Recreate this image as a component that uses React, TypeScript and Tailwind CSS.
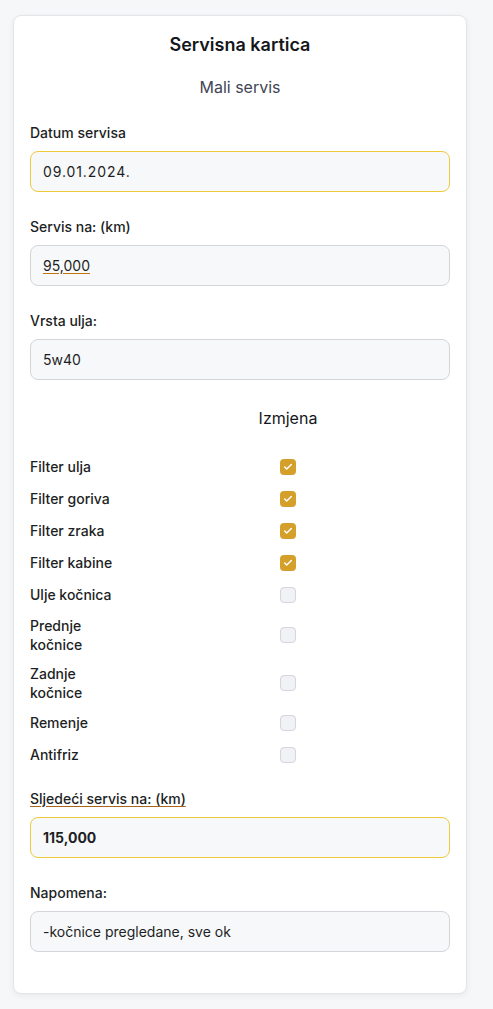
import { Check } from "lucide-react";

type Item = { label: string; checked: boolean; twoLine?: boolean };

const items: Item[] = [
  { label: "Filter ulja", checked: true },
  { label: "Filter goriva", checked: true },
  { label: "Filter zraka", checked: true },
  { label: "Filter kabine", checked: true },
  { label: "Ulje kočnica", checked: false },
  { label: "Prednje kočnice", checked: false, twoLine: true },
  { label: "Zadnje kočnice", checked: false, twoLine: true },
  { label: "Remenje", checked: false },
  { label: "Antifriz", checked: false },
];

function Box({ checked }: { checked: boolean }) {
  if (checked) {
    return (
      <span className="flex h-4 w-4 items-center justify-center rounded-[4px] bg-[#d4a02b]">
        <Check size={10} strokeWidth={3.5} className="text-white" />
      </span>
    );
  }
  return <span className="block h-4 w-4 rounded-[4px] border border-[#d4d6db] bg-[#f1f2f5]" />;
}

export default function App() {
  return (
    <div className="min-h-[1009px] bg-[#f6f7f9] pt-[15px] font-['Inter','Noto_Sans',sans-serif] text-[#1d1f24]">
      <div className="ml-[13px] w-[454px] rounded-lg border border-[#e4e5e8] bg-white px-4 pt-[15px] pb-[41px] shadow-[0_2px_6px_rgba(0,0,0,0.06)]">
        <h1 className="text-center text-[18px] leading-7 font-semibold text-[#15171c]">
          Servisna kartica
        </h1>
        <p className="mt-4 text-center text-base leading-6 text-[#414654]">Mali servis</p>

        <label className="mt-6 block text-sm leading-5 font-medium">Datum servisa</label>
        <div className="mt-2 flex h-[41px] items-center rounded-lg border border-[#efc93c] bg-[#f7f8fa] px-3 text-sm tracking-[0.9px]">
          09.01.2024.
        </div>

        <label className="mt-[25px] block text-sm leading-5 font-medium">Servis na: (km)</label>
        <div className="mt-2 flex h-[41px] items-center rounded-lg border border-[#d3d5da] bg-[#f7f8fa] px-3 text-sm">
          <span className="underline decoration-[#c0720c] underline-offset-2">95,000</span>
        </div>

        <label className="mt-[25px] block text-sm leading-5 font-medium">Vrsta ulja:</label>
        <div className="mt-2 flex h-[41px] items-center rounded-lg border border-[#d3d5da] bg-[#f7f8fa] px-3 text-sm">
          5w40
        </div>

        <div className="mt-[26px] grid grid-cols-[96px_1fr]">
          <div />
          <div className="text-center text-base leading-6 text-[#15171c]">Izmjena</div>
        </div>

        <div className="mt-[21px] grid grid-cols-[96px_1fr]">
          {items.map((it) => (
            <div key={it.label} className="contents">
              <div
                className={
                  it.twoLine
                    ? "flex h-12 items-center text-sm leading-[19px] font-medium"
                    : "flex h-8 items-center text-sm leading-5 font-medium"
                }
              >
                {it.twoLine ? (
                  <span className="block w-[70px]">{it.label}</span>
                ) : (
                  <span>{it.label}</span>
                )}
              </div>
              <div className="flex items-center justify-center">
                <Box checked={it.checked} />
              </div>
            </div>
          ))}
        </div>

        <label className="mt-[18px] block text-sm leading-5 font-medium">
          <span className="underline decoration-[#a8661a] underline-offset-2">Sljedeći servis na: (km)</span>
        </label>
        <div className="mt-2 flex h-[41px] items-center rounded-lg border border-[#efc93c] bg-[#f7f8fa] px-3 text-sm font-bold">
          115,000
        </div>

        <label className="mt-[25px] block text-sm leading-5 font-medium">Napomena:</label>
        <div className="mt-2 flex h-[41px] items-center rounded-lg border border-[#d3d5da] bg-[#f7f8fa] px-3 text-sm">
          -kočnice pregledane, sve ok
        </div>
      </div>
    </div>
  );
}
